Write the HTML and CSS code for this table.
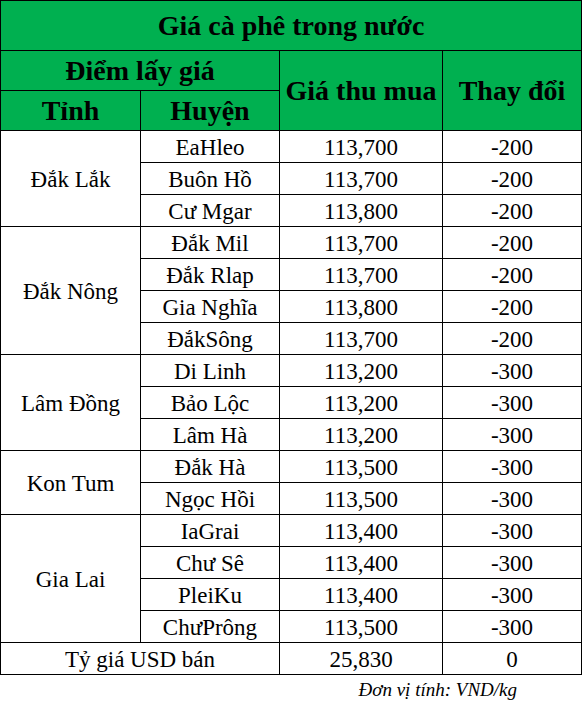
FILE: index.html
```html
<!DOCTYPE html>
<html lang="vi">
<head>
<meta charset="utf-8">
<title>Giá cà phê trong nước</title>
<link rel="stylesheet" href="styles.css">
</head>
<body>
<div class="wrap">
<table class="price">
  <colgroup>
    <col class="c1"><col class="c2"><col class="c3"><col class="c4">
  </colgroup>
  <thead>
    <tr class="title-row"><th colspan="4">Giá cà phê trong nước</th></tr>
    <tr class="head-row"><th colspan="2">Điểm lấy giá</th><th rowspan="2">Giá thu mua</th><th rowspan="2">Thay đổi</th></tr>
    <tr class="head-row"><th>Tỉnh</th><th>Huyện</th></tr>
  </thead>
  <tbody>
    <tr><td rowspan="3">Đắk Lắk</td><td>EaHleo</td><td>113,700</td><td>-200</td></tr>
    <tr><td>Buôn Hồ</td><td>113,700</td><td>-200</td></tr>
    <tr><td>Cư Mgar</td><td>113,800</td><td>-200</td></tr>
    <tr><td rowspan="4">Đắk Nông</td><td>Đắk Mil</td><td>113,700</td><td>-200</td></tr>
    <tr><td>Đắk Rlap</td><td>113,700</td><td>-200</td></tr>
    <tr><td>Gia Nghĩa</td><td>113,800</td><td>-200</td></tr>
    <tr><td>ĐắkSông</td><td>113,700</td><td>-200</td></tr>
    <tr><td rowspan="3">Lâm Đồng</td><td>Di Linh</td><td>113,200</td><td>-300</td></tr>
    <tr><td>Bảo Lộc</td><td>113,200</td><td>-300</td></tr>
    <tr><td>Lâm Hà</td><td>113,200</td><td>-300</td></tr>
    <tr><td rowspan="2">Kon Tum</td><td>Đắk Hà</td><td>113,500</td><td>-300</td></tr>
    <tr><td>Ngọc Hồi</td><td>113,500</td><td>-300</td></tr>
    <tr><td rowspan="4">Gia Lai</td><td>IaGrai</td><td>113,400</td><td>-300</td></tr>
    <tr><td>Chư Sê</td><td>113,400</td><td>-300</td></tr>
    <tr><td>PleiKu</td><td>113,400</td><td>-300</td></tr>
    <tr><td>ChưPrông</td><td>113,500</td><td>-300</td></tr>
    <tr><td colspan="2">Tỷ giá USD bán</td><td>25,830</td><td>0</td></tr>
  </tbody>
</table>
<p class="note">Đơn vị tính: VND/kg</p>
</div>
</body>
</html>
```
FILE: styles.css
```css
html, body {
  margin: 0;
  padding: 0;
  background: #ffffff;
}
.wrap {
  width: 583px;
  font-family: "Liberation Serif", "Times New Roman", serif;
  color: #000;
}
.price {
  width: 581px;
  border-collapse: collapse;
  table-layout: fixed;
}
.c1 { width: 140px; }
.c2 { width: 139px; }
.c3 { width: 163px; }
.c4 { width: 139px; }
.price th,
.price td {
  border: 1px solid #000;
  padding: 0;
  text-align: center;
  vertical-align: middle;
  line-height: 1;
}
.price th {
  background: #00b050;
  font-weight: bold;
  font-size: 28px;
}
.title-row th { height: 49px; }
.head-row th { height: 39px; }
.price td {
  font-size: 23px;
  height: 29px;
  padding-top: 2px;
}
.note {
  margin: 0;
  padding: 4px 66px 0 0;
  text-align: right;
  font-style: italic;
  font-size: 19px;
  line-height: 22px;
}
```
